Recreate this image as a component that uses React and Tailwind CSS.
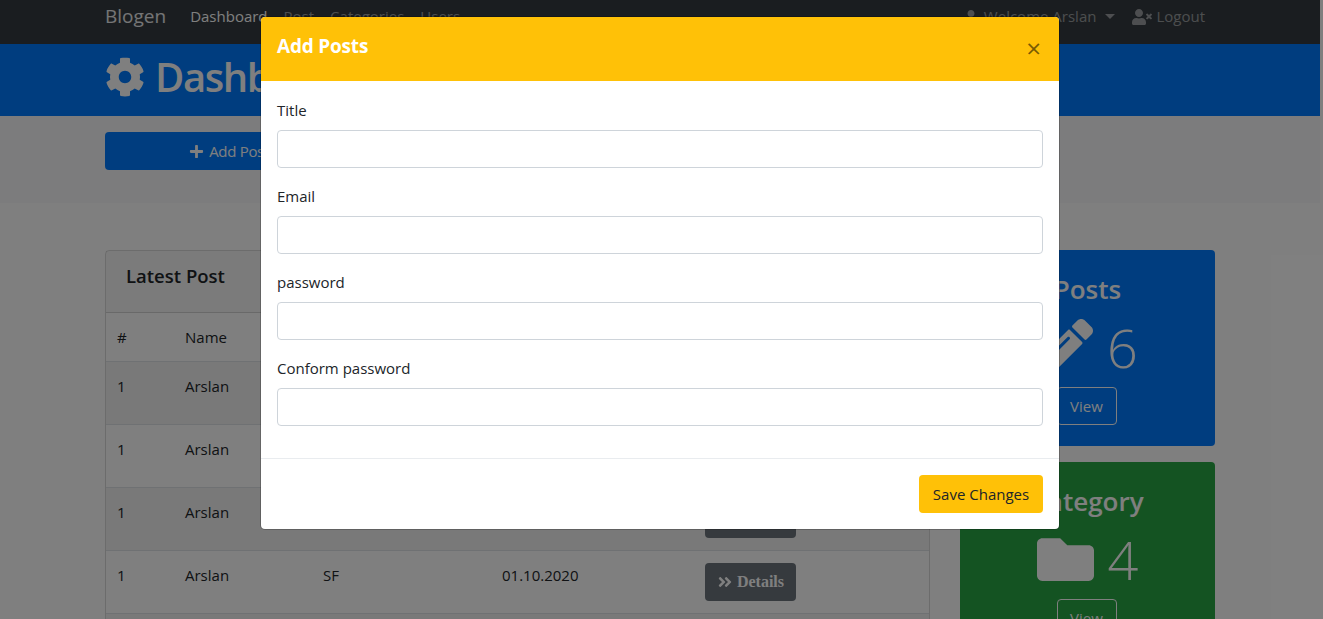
import React from "react";
import { FaCog, FaPlus, FaUser, FaUserTimes, FaAngleDoubleRight, FaPencilAlt, FaFolder } from "react-icons/fa";

const font = { fontFamily: '"Open Sans", "Noto Sans", sans-serif' };

function Row({ stripe }) {
  return (
    <tr className={`border-t border-[#dee2e6] h-[63px] align-top ${stripe ? "bg-[#f2f2f2]" : ""}`}>
      <td className="pl-[11px] pt-[13px] w-[79px]">1</td>
      <td className="pt-[13px] w-[138px]">Arslan</td>
      <td className="pt-[13px] w-[179px]">SF</td>
      <td className="pt-[13px] w-[203px]">01.10.2020</td>
      <td className="pt-[12px]">
        <button className="flex h-[38px] w-[91px] items-center justify-center gap-[4px] rounded bg-[#6c757d] text-[16px] font-bold text-white [font-family:'Liberation_Serif',serif]">
          <FaAngleDoubleRight className="text-[16px]" /> Details
        </button>
      </td>
    </tr>
  );
}

function Stat({ title, value, icon, bg, view, gap }) {
  return (
    <div className={`${bg} flex flex-col items-center rounded text-white pt-[20px] h-[196px]`}>
      <div className="text-[26px] font-semibold leading-[38px]">{title}</div>
      <div className={`mt-[8px] flex h-[62px] items-center ${gap}`}>
        {icon}
        <span className="text-[54px] font-light leading-none">{value}</span>
      </div>
      <button className="mt-[9px] mr-[2px] h-[38px] w-[60px] rounded border border-white text-[15px]">{view}</button>
    </div>
  );
}

function Field({ label }) {
  return (
    <div className="mb-[16px]">
      <label className="block h-[24px] text-[15px] leading-[24px] mb-[8px] text-[#212529]">{label}</label>
      <input className="block h-[38px] w-full rounded border border-[#ced4da] bg-white" />
    </div>
  );
}

export default function App() {
  return (
    <div className="relative h-[619px] w-[1323px] overflow-hidden bg-white text-[15px] text-[#212529]" style={font}>
      <div className="w-[1320px]">
        <nav className="flex h-[44px] bg-[#343a40] px-[105px] text-[15px]">
          <span className="text-[19px] leading-[33px] text-white/90 mr-[24px]">Blogen</span>
          <div className="flex gap-4 leading-[33px] text-white/50">
            <span className="text-white">Dashboard</span>
            <span>Post</span>
            <span>Categories</span>
            <span>Users</span>
          </div>
          <div className="ml-auto flex items-center h-[33px] gap-[17px] pr-[10px] text-white/50">
            <span className="flex items-center gap-[6px]"><FaUser className="text-[14px]" /> Welcome Arslan <span className="ml-[3px] border-x-[5px] border-t-[5px] border-x-transparent border-t-current" /></span>
            <span className="flex items-center gap-1"><FaUserTimes className="text-[20px]" /> Logout</span>
          </div>
        </nav>
        <header className="flex h-[72px] items-center gap-[10px] bg-[#007bff] px-[105px] text-white pb-[6px]">
          <FaCog className="text-[40px]" />
          <h1 className="text-[40px] font-semibold tracking-[-1.4px]">Dashboard</h1>
        </header>
        <section className="h-[87px] bg-[#f8f9fa] px-[105px] pt-[16px]">
          <button className="flex h-[38px] w-[255px] items-center justify-center gap-[5px] rounded bg-[#007bff] tracking-[-0.3px] text-white">
            <FaPlus className="text-[15px]" /> Add Posts
          </button>
        </section>
        <main className="flex gap-[30px] px-[105px] pt-[47px]">
          <div className="w-[825px] shrink-0 rounded-t border border-black/15">
            <div className="h-[62px] border-b border-black/15 bg-black/[0.03] px-5 pt-[9px] text-[18.5px] font-semibold leading-[32px]">Latest Post</div>
            <table className="w-full border-collapse text-left">
              <thead>
                <tr className="h-[48px]">
                  <th className="pl-[11px] font-normal">#</th>
                  <th className="font-normal">Name</th>
                  <th /><th /><th />
                </tr>
              </thead>
              <tbody>
                <Row stripe /><Row /><Row stripe /><Row /><Row stripe />
              </tbody>
            </table>
          </div>
          <div className="flex w-[255px] shrink-0 flex-col gap-[16px]">
            <Stat title="Posts" value="6" view="View" gap="gap-[14px]" bg="bg-[#007bff]" icon={<FaPencilAlt className="text-[56px]" />} />
            <Stat title="Category" value="4" view="View" gap="gap-[14px]" bg="bg-[#28a745]" icon={<FaFolder className="text-[57px]" />} />
          </div>
        </main>
      </div>

      <div className="absolute inset-0 bg-black/50">
        <div className="absolute left-[261px] top-[17px] w-[798px] overflow-hidden rounded-[4px] bg-white shadow-[0_0_0_1px_rgba(0,0,0,0.2)]">
          <div className="flex h-[64px] items-center justify-between bg-[#ffc107] px-4 pb-[6px] text-white">
            <h5 className="text-[19px] font-bold tracking-[-0.2px]">Add Posts</h5>
            <span className="mr-[2px] mt-[4px] text-[26px] font-normal leading-none text-black/55">×</span>
          </div>
          <div className="h-[378px] border-b border-[#e9ecef] px-4 pt-[17px]">
            <Field label="Title" />
            <Field label="Email" />
            <Field label="password" />
            <Field label="Conform password" />
          </div>
          <div className="flex h-[70px] items-center justify-end px-4">
            <button className="h-[38px] w-[124px] rounded bg-[#ffc107] pt-[1px] text-[15px] text-[#212529]">Save Changes</button>
          </div>
        </div>
      </div>
    </div>
  );
}
